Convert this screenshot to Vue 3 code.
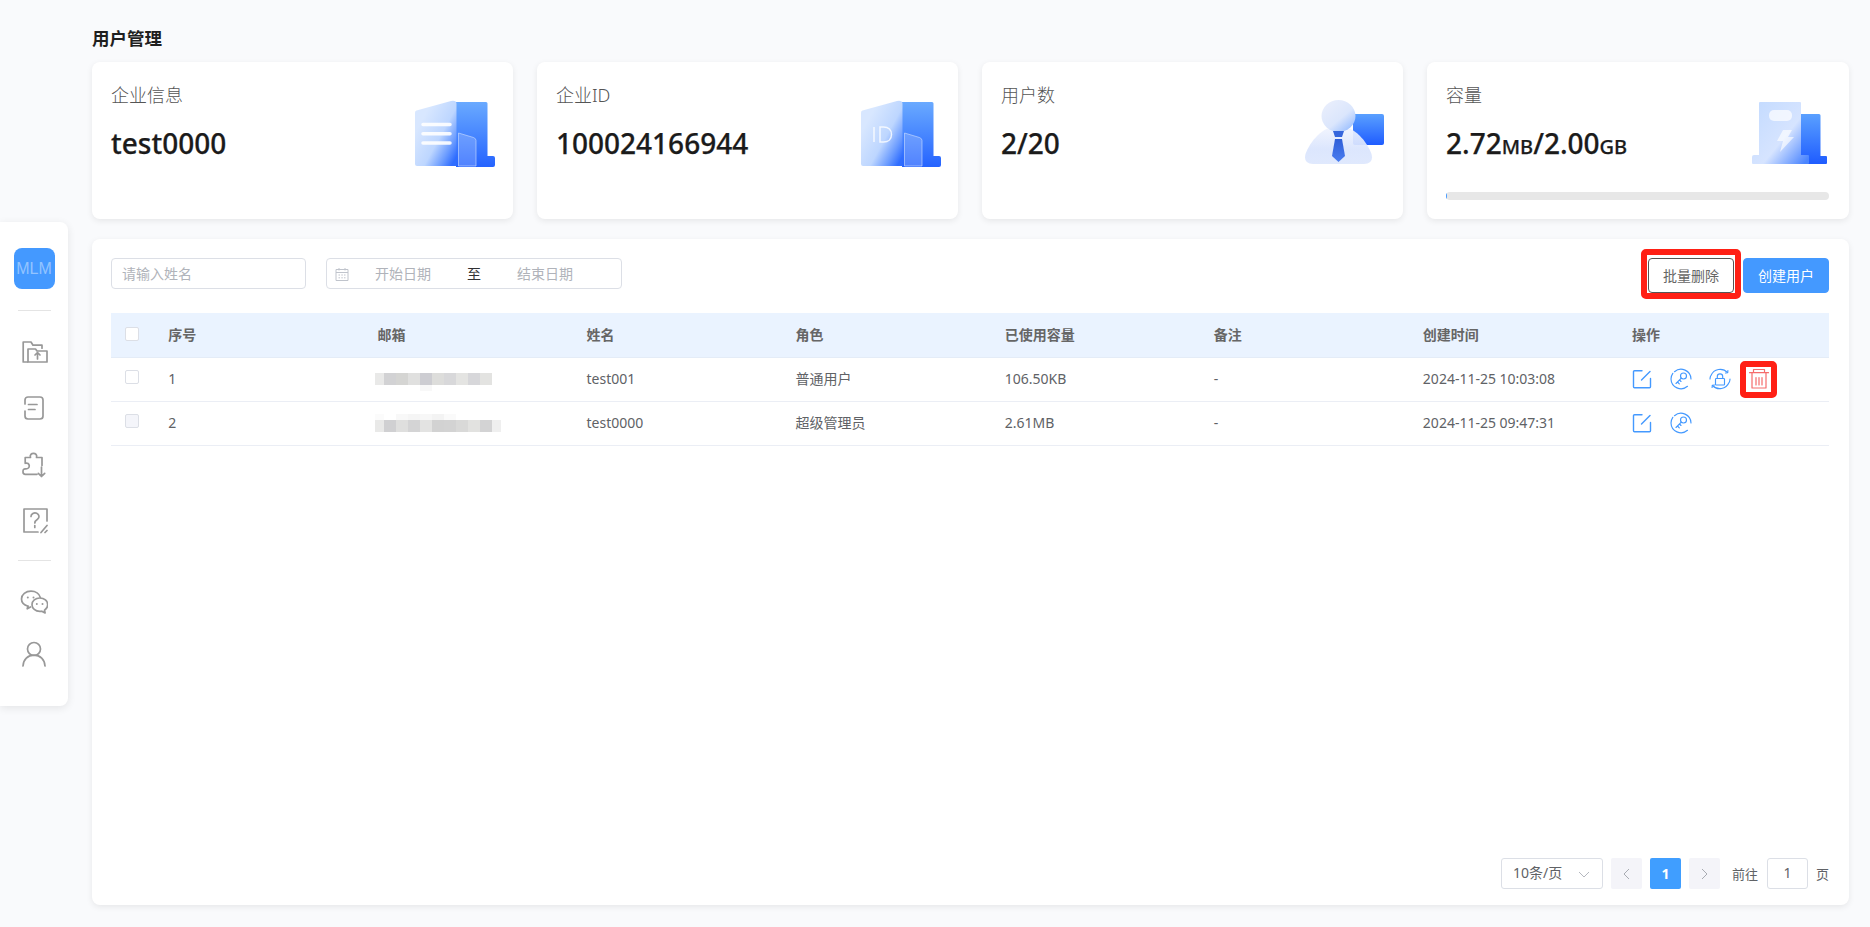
<script setup>
const rows = [
  { id: 1, name: 'test001', role: '普通用户', used: '106.50KB', note: '-', time: '2024-11-25 10:03:08', mClass: 'm1', disabled: false, full: true,
    mosaic: [
      { h: 12, cells: [[9,'#e9e9e8'],[12,'#d2d2d4'],[12,'#d5d5d3'],[12,'#e0e0df'],[12,'#cdcdd2'],[12,'#dddddb'],[12,'#d8d8da'],[12,'#e4e4e2'],[12,'#d7d7da'],[12,'#e3e3e1']] },
      { h: 6, cells: [[45,'#fff'],[12,'#f8f8f8']] }
    ] },
  { id: 2, name: 'test0000', role: '超级管理员', used: '2.61MB', note: '-', time: '2024-11-25 09:47:31', mClass: 'm2', disabled: true, full: false,
    mosaic: [
      { h: 6, cells: [[9,'#fbfbfb'],[12,'#fff'],[12,'#f8f8f8'],[12,'#f5f5f5'],[12,'#f7f7f7'],[12,'#f3f3f3'],[12,'#fafafa']] },
      { h: 12, cells: [[9,'#e9e9e8'],[12,'#d0d0d2'],[12,'#dfdfde'],[12,'#d4d4d5'],[12,'#e3e3e2'],[12,'#d2d2d2'],[12,'#d3d3d3'],[12,'#d9d9d8'],[12,'#e2e2e0'],[12,'#d3d3d4'],[9,'#efefef']] }
    ] }
]
const columns = ['序号', '邮箱', '姓名', '角色', '已使用容量', '备注', '创建时间', '操作']
</script>

<template>
  <div class="page">
    <aside class="side">
      <div class="logo">MLM</div>
      <div class="rule first"></div>
      <svg class="nav first-ic" viewBox="0 0 28 28"><path d="M7.500 24H3.200V4H11l2 3.200h9v3"/><path d="M8 24V11h7.500l1.500 2H27v11z"/><path d="M17.500 21v-6.200M15 17l2.500-2.500L20 17"/></svg>
      <svg class="nav" viewBox="0 0 28 28"><path d="M5 10V6a3 3 0 0 1 3-3h12a3 3 0 0 1 3 3v16a3 3 0 0 1-3 3H8a3 3 0 0 1-3-3v-5"/><path d="M8.500 10.500h8.500M8.500 15.500h6.500"/></svg>
      <svg class="nav" viewBox="0 0 28 28"><path d="M22 15.500V7.500h-5.500c1.700-5.500-7.800-5.500-6 0H5.200v5.800c4.800-1.700 6 6.200 0 5.500-1.500 0-2.200 1-2.200 2.700v.5c0 1.500 1 2.300 2.300 2.300H17"/><path d="M21.500 17v9.500M18.300 23.300l3.200 3.200 3.200-3.200"/></svg>
      <svg class="nav" viewBox="0 0 28 28"><path d="M27 15V3H4v23h14"/><path d="M11 10.500a4 3.600 0 1 1 6.500 2.800c-1.800 1.200-2.700 1.900-2.700 3.700M14.800 19.500v2"/><path d="M21 26.500l6-7M25 26.500l2-2"/></svg>
      <div class="rule second"></div>
      <svg class="nav wechat" viewBox="0 0 28 28"><path d="M8 18.200C4 17 1.500 14.300 1.500 11 1.500 6.600 5.800 3.200 11 3.200c4.600 0 8.400 2.600 9.300 6.200"/><path d="M8 18l-.8 2.800 3.300-1.900"/><path d="M19.800 10c4.500 0 7.900 3 7.900 6.700 0 2.300-1.200 4.200-3.200 5.500l.6 2.800-3.300-1.800c-.7.200-1.300.2-2 .2-4.400 0-7.800-3-7.800-6.700S15.400 10 19.800 10z"/><circle class="dot" cx="7.800" cy="9.500" r="1"/><circle class="dot" cx="13.500" cy="9.500" r="1"/><circle class="dot" cx="16.800" cy="16" r="1"/><circle class="dot" cx="22.500" cy="16" r="1"/></svg>
      <svg class="nav user" viewBox="0 0 28 28"><circle cx="14" cy="9" r="6.500"/><path d="M3 26c.3-6.600 4.800-10.800 11-10.800S24.700 19.400 25 26"/></svg>
    </aside>

    <main class="main">
      <h1 class="title">用户管理</h1>

      <section class="cards">
        <article class="card">
          <div class="card-label">企业信息</div>
          <div class="card-value">test0000</div>
          <svg class="art a1" viewBox="0 0 80 67">
            <defs>
              <linearGradient id="bk1" x1="0" y1="0" x2="0" y2="1"><stop offset="0" stop-color="#6aaaff"/><stop offset="1" stop-color="#2563ff"/></linearGradient>
              <linearGradient id="fr1" x1=".25" y1=".2" x2="1" y2=".85"><stop offset="0" stop-color="#d8e7ff"/><stop offset=".5" stop-color="#bdd6ff"/><stop offset=".8" stop-color="#6a9bff"/><stop offset="1" stop-color="#2f6dff"/></linearGradient>
              <filter id="sf1"><feGaussianBlur stdDeviation=".5"/></filter>
            </defs>
            <path d="M41 2h30a1.500 1.500 0 0 1 1.500 1.500V56H78a2 2 0 0 1 2 2v7a2 2 0 0 1-2 2H41z" fill="url(#bk1)"/>
            <path d="M1.500 10.500L36 1q5.500-1 5.500 3V66H2a2 2 0 0 1-2-2V12.500q0-1.500 1.500-2z" fill="url(#fr1)"/>
            <path d="M43.500 33l15 4.500q2.500 1 2.500 3V66H43.500z" fill="#fff" fill-opacity=".2" stroke="#cfe0ff" stroke-opacity=".6"/>
            <path d="M8 24.500h27M8 33.800h27M8 43h27" stroke="#fff" stroke-width="3.500" stroke-linecap="round" stroke-opacity=".9" filter="url(#sf1)"/>
          </svg>
        </article>
        <article class="card">
          <div class="card-label">企业ID</div>
          <div class="card-value">100024166944</div>
          <svg class="art a1 a2" viewBox="0 0 80 67">
            <defs>
              <linearGradient id="bk2" x1="0" y1="0" x2="0" y2="1"><stop offset="0" stop-color="#6aaaff"/><stop offset="1" stop-color="#2563ff"/></linearGradient>
              <linearGradient id="fr2" x1=".25" y1=".2" x2="1" y2=".85"><stop offset="0" stop-color="#d8e7ff"/><stop offset=".5" stop-color="#bdd6ff"/><stop offset=".8" stop-color="#6a9bff"/><stop offset="1" stop-color="#2f6dff"/></linearGradient>
            </defs>
            <path d="M41 2h30a1.500 1.500 0 0 1 1.500 1.500V56H78a2 2 0 0 1 2 2v7a2 2 0 0 1-2 2H41z" fill="url(#bk2)"/>
            <path d="M1.500 10.500L36 1q5.500-1 5.500 3V66H2a2 2 0 0 1-2-2V12.500q0-1.500 1.500-2z" fill="url(#fr2)"/>
            <path d="M43.500 33l15 4.500q2.500 1 2.500 3V66H43.500z" fill="#fff" fill-opacity=".2" stroke="#cfe0ff" stroke-opacity=".6"/>
            <path d="M13 27v15M19 27v15h3.500c5 0 8-3 8-7.500S27.500 27 22.500 27z" fill="none" stroke="#fff" stroke-width="1.500" stroke-opacity=".8"/>
          </svg>
        </article>
        <article class="card">
          <div class="card-label">用户数</div>
          <div class="card-value">2/20</div>
          <svg class="art a3" viewBox="0 0 79 64">
            <defs>
              <linearGradient id="bk3" x1="0" y1="0" x2="0" y2="1"><stop offset="0" stop-color="#5aa0ff"/><stop offset="1" stop-color="#1f5cff"/></linearGradient>
              <linearGradient id="hd3" x1=".1" y1=".1" x2=".9" y2="1"><stop offset="0" stop-color="#e9eefc"/><stop offset=".55" stop-color="#dbe6fc"/><stop offset="1" stop-color="#8fb8ff"/></linearGradient>
              <linearGradient id="bd3" x1="0" y1="0" x2="0" y2="1"><stop offset="0" stop-color="#f2f5fe"/><stop offset=".6" stop-color="#d9e4fd"/><stop offset="1" stop-color="#dde7fd"/></linearGradient>
              <linearGradient id="tie3" x1="0" y1="0" x2="0" y2="1"><stop offset="0" stop-color="#2f5fd8"/><stop offset="1" stop-color="#4a7df0"/></linearGradient>
            </defs>
            <rect x="48" y="14" width="31" height="31" rx="2" fill="url(#bk3)"/>
            <path d="M33.500 26C50 26 62 42 66.500 54q2.500 10-7.500 10H8Q-2 64 .5 54C5 42 17 26 33.500 26z" fill="url(#bd3)" fill-opacity=".92"/>
            <ellipse cx="33.500" cy="16" rx="17" ry="16" fill="url(#hd3)"/>
            <path d="M28 31h11l-2 6h-7z" fill="#3566dc"/>
            <path d="M30 39h7l3 17-6.500 6-6.500-6z" fill="url(#tie3)"/>
          </svg>
        </article>
        <article class="card">
          <div class="card-label">容量</div>
          <div class="card-value">2.72<small>MB</small>/2.00<small>GB</small></div>
          <div class="meter"><div class="meter-fill"></div></div>
          <svg class="art a4" viewBox="0 0 75 62">
            <defs>
              <linearGradient id="bk4" x1="0" y1="0" x2="0" y2="1"><stop offset="0" stop-color="#5aa0ff"/><stop offset="1" stop-color="#1f5cff"/></linearGradient>
              <linearGradient id="fr4" x1=".1" y1=".1" x2="1" y2=".9"><stop offset="0" stop-color="#c6dcff"/><stop offset=".55" stop-color="#d6e4ff"/><stop offset="1" stop-color="#4b85ff"/></linearGradient>
              <filter id="sf4"><feGaussianBlur stdDeviation=".6"/></filter>
            </defs>
            <path d="M49 12h18a1.500 1.500 0 0 1 1.500 1.500V54H74a1 1 0 0 1 1 1v6a1 1 0 0 1-1 1H49z" fill="url(#bk4)"/>
            <path d="M8 0h40a1 1 0 0 1 1 1v52h7a1 1 0 0 1 1 1v7a1 1 0 0 1-1 1H1a1 1 0 0 1-1-1v-6a2 2 0 0 1 2-2h5V1a1 1 0 0 1 1-1z" fill="url(#fr4)"/>
            <rect x="17" y="8" width="23" height="11" rx="5" fill="#fff" fill-opacity=".7" filter="url(#sf4)"/>
            <path d="M31 28h9l-4 7h6L28 50l3-11h-6z" fill="#fff" fill-opacity=".65"/>
          </svg>
        </article>
      </section>

      <section class="panel">
        <div class="toolbar">
          <div class="field name-field">请输入姓名</div>
          <div class="field date-field">
            <svg class="cal" viewBox="0 0 14 14"><path d="M1 2.500h12v11H1zM1 5.500h12M4 1v2.500M10 1v2.500"/><path d="M3.500 8h1.500M6.300 8h1.500M9 8h1.500M3.500 10.800h1.500M6.300 10.800h1.500M9 10.800h1.500"/></svg>
            <span class="date-part">开始日期</span>
            <span class="date-sep">至</span>
            <span class="date-part">结束日期</span>
          </div>
          <div class="spacer"></div>
          <button class="btn plain">批量删除<i class="mark mark-btn"></i></button>
          <button class="btn primary">创建用户</button>
        </div>

        <div class="grid head">
          <div class="cell check-cell"><span class="check"></span></div>
          <div v-for="c in columns" :key="c" class="cell">{{ c }}</div>
        </div>

        <div v-for="r in rows" :key="r.id" class="grid row">
          <div class="cell check-cell"><span class="check up" :class="{ off: r.disabled }"></span></div>
          <div class="cell txt">{{ r.id }}</div>
          <div class="cell"><div class="mosaic" :class="r.mClass">
            <div v-for="(line, li) in r.mosaic" :key="li" class="mosaic-line">
              <i v-for="(c, ci) in line.cells" :key="ci" :style="{ width: c[0] + 'px', height: line.h + 'px', background: c[1] }"></i>
            </div>
          </div></div>
          <div class="cell txt">{{ r.name }}</div>
          <div class="cell txt cjk">{{ r.role }}</div>
          <div class="cell txt">{{ r.used }}</div>
          <div class="cell txt">{{ r.note }}</div>
          <div class="cell txt">{{ r.time }}</div>
          <div class="cell ops">
            <svg class="op" viewBox="0 0 22 22"><path d="M11 2.800H3.500a1 1 0 0 0-1 1v15a1 1 0 0 0 1 1h15a1 1 0 0 0 1-1V10.500"/><path d="M10.500 12L19 3.500"/></svg>
            <svg class="op thin" viewBox="0 0 22 22"><path d="M4.500 3.700A10 10 0 0 1 21 11M17.500 18.300A10 10 0 0 1 1 11a10 10 0 0 1 1.800-5.700"/><circle cx="13.500" cy="8" r="3"/><path d="M11.300 10.200l-5.300 5.300M7.500 14l1.800 1.800M9.500 12l1.500 1.500"/></svg>
            <svg v-if="r.full" class="op thin" viewBox="0 0 22 22"><path d="M2 7.500A10 10 0 0 1 18.500 4.500M20 14.500A10 10 0 0 1 3.500 17.500M1 11a10 10 0 0 1 .6-3M21 11a10 10 0 0 1-.6 3"/><path d="M16.500 5l2.200-.3.200-2.200M5.500 17l-2.200.3-.2 2.200"/><rect x="6.500" y="10.500" width="9" height="6.500" rx=".8"/><path d="M8.300 10.500V8.500a2.700 2.700 0 0 1 5.400 0v2"/></svg>
            <span v-if="r.full" class="trash-wrap">
              <svg class="op trash" viewBox="0 0 22 22"><path d="M1.500 4.700h19M5.500 4.700V1.500h11v3.200M4 4.700V20h14V4.700M8 9.500v7.500M11 9.500v7.500M14 9.500v7.500"/></svg>
              <i class="mark mark-trash"></i>
            </span>
          </div>
        </div>

        <div class="pager">
          <div class="pg-select">10条/页<svg class="chev" viewBox="0 0 12 7"><path d="M1 1l5 5 5-5"/></svg></div>
          <div class="pg-btn"><svg class="arrow" viewBox="0 0 7 12"><path d="M6 1L1 6l5 5"/></svg></div>
          <div class="pg-btn active">1</div>
          <div class="pg-btn"><svg class="arrow" viewBox="0 0 7 12"><path d="M1 1l5 5-5 5"/></svg></div>
          <span class="pg-text goto">前往</span>
          <div class="pg-input">1</div>
          <span class="pg-text">页</span>
        </div>
      </section>
    </main>
  </div>
</template>

<style>
html, body { margin: 0; background: #f9fafc; }
</style>

<style scoped>
* { box-sizing: border-box; }
.page {
  display: flex;
  height: 927px;
  width: 1870px;
  overflow: hidden;
  background: #f9fafc;
  font-family: "Noto Sans", "Noto Sans CJK SC", sans-serif;
  color: #606266;
}

.side {
  flex: 0 0 68px;
  height: 484px;
  align-self: center;
  display: flex;
  flex-direction: column;
  align-items: center;
  padding-top: 26px;
  background: #fff;
  border-radius: 0 8px 8px 0;
  box-shadow: 0 2px 8px rgba(0, 0, 0, .09);
}
.logo {
  width: 41px;
  height: 41px;
  border-radius: 8px;
  background: #4499ff;
  color: #93c4ff;
  font: 400 16px/41px "Liberation Sans", sans-serif;
  text-align: center;
}
.rule { width: 33px; height: 1px; background: #e4e4e4; }
.rule.first { margin-top: 21px; }
.rule.second { margin-top: 26px; }
.nav {
  width: 28px;
  height: 28px;
  margin-top: 28px;
  fill: none;
  stroke: #989898;
  stroke-width: 1.7;
  stroke-linecap: round;
  stroke-linejoin: round;
}
.nav.first-ic { margin-top: 27px; }
.nav.wechat { margin-top: 27px; }
.nav.user { margin-top: 24px; }
.dot { fill: #989898; stroke: none; }

.main {
  flex: 1;
  min-width: 0;
  display: flex;
  flex-direction: column;
  padding: 26px 21px 22px 24px;
}
.title {
  margin: 0 0 12px;
  font-size: 17.5px;
  line-height: 24px;
  font-weight: 600;
  color: #1f1f1f;
}
.cards {
  display: grid;
  grid-template-columns: repeat(3, 421px) 1fr;
  gap: 24px;
}
.card {
  position: relative;
  height: 157px;
  padding: 21px 19px 0;
  background: #fff;
  border-radius: 8px;
  box-shadow: 0 2px 6px rgba(0, 0, 0, .08);
}
.card-label {
  font-size: 18px;
  line-height: 24px;
  font-weight: 300;
  color: #555;
}
.card-value {
  margin-top: 17px;
  font-size: 28px;
  line-height: 38px;
  font-weight: 500;
  color: #1b1b1b;
  -webkit-text-stroke: .25px #1b1b1b;
}
.card-value small { font-size: 20px; font-weight: 500; }
.art { position: absolute; }
.a1 { width: 80px; height: 67px; right: 18px; top: 38px; }
.a2 { right: 17px; }
.a3 { width: 79px; height: 64px; right: 19px; top: 38px; }
.a4 { width: 75px; height: 62px; right: 22px; top: 40px; }
.meter {
  height: 8px;
  margin: 26px 1px 0 0;
  border-radius: 4px;
  background: #e7e7e7;
  overflow: hidden;
}
.meter-fill { width: 1px; height: 100%; background: #4499ff; }

.panel {
  flex: 1;
  min-height: 0;
  display: flex;
  flex-direction: column;
  margin-top: 20px;
  padding: 19px 20px 16px 19px;
  background: #fff;
  border-radius: 8px;
  box-shadow: 0 2px 6px rgba(0, 0, 0, .08);
}
.toolbar { display: flex; align-items: flex-start; height: 35px; }
.field {
  height: 31px;
  border: 1px solid #dcdfe6;
  border-radius: 4px;
  font-size: 14px;
  line-height: 29px;
  color: #b0b3ba;
}
.name-field { width: 195px; padding-left: 10px; margin-right: 20px; }
.date-field { width: 296px; display: flex; align-items: center; padding-left: 8px; }
.cal {
  width: 14px;
  height: 14px;
  fill: none;
  stroke: #c0c4cc;
  stroke-width: 1;
}
.date-part { width: 108px; text-align: center; }
.date-sep { width: 34px; text-align: center; color: #303133; }
.spacer { flex: 1; }
.btn {
  position: relative;
  width: 86px;
  height: 35px;
  padding: 0;
  border-radius: 4px;
  font: 400 14px/33px "Noto Sans", "Noto Sans CJK SC", sans-serif;
  text-align: center;
}
.btn.plain { background: #fff; border: 1px solid #555; color: #666; margin-right: 9px; }
.btn.primary { background: #4499ff; border: 1px solid #4499ff; color: #fff; }
.mark {
  position: absolute;
  border: 6px solid #ff2015;
  border-radius: 5px;
  pointer-events: none;
}
.mark-btn { left: -8px; right: -8px; top: -10px; bottom: -7px; }

.grid {
  display: grid;
  grid-template-columns: 57.3px repeat(7, 209.1px) 1fr;
  align-items: center;
  font-size: 14px;
}
.head {
  height: 45px;
  margin-top: 20px;
  background: #eaf3ff;
  font-weight: 600;
  color: #666;
  border-bottom: 1px solid #e4ecf7;
}
.row {
  height: 44px;
  border-bottom: 1px solid #ebeef5;
  color: #606266;
}
.head .cell { padding-bottom: 3px; }
.txt { padding-bottom: 2px; }
.txt.cjk { padding-bottom: 4px; }
.check-cell { padding-left: 14px; display: flex; align-items: center; }
.check {
  width: 14px;
  height: 14px;
  background: #fff;
  border: 1px solid #dcdfe6;
  border-radius: 2px;
}
.check.up { margin-bottom: 5px; }
.check.off { background: #f4f5fa; }
.mosaic { display: flex; flex-direction: column; margin-left: -2px; }
.mosaic.m1 { margin-top: 4px; }
.mosaic.m2 { margin-top: -1px; }
.mosaic-line { display: flex; }
.mosaic-line i { display: block; }
.ops { display: flex; align-items: center; gap: 17px; padding-bottom: 2px; margin-left: -1px; }
.op {
  flex: none;
  width: 22px;
  height: 22px;
  fill: none;
  stroke: #4499ff;
  stroke-width: 1.4;
  stroke-linecap: round;
  stroke-linejoin: round;
}
.op.thin { stroke-width: 1.15; }
.trash-wrap { position: relative; display: block; width: 22px; height: 22px; }
.trash { display: block; stroke: #f56c6c; stroke-width: 1.2; }
.mark-trash { left: -8px; right: -7px; top: -7px; bottom: -8px; }

.pager {
  margin-top: auto;
  display: flex;
  align-items: center;
  justify-content: flex-end;
  height: 31px;
  font-size: 13px;
  color: #606266;
}
.pg-select {
  position: relative;
  width: 102px;
  height: 31px;
  margin-right: 8px;
  padding-left: 11px;
  border: 1px solid #dcdfe6;
  border-radius: 3px;
  font-size: 14px;
  line-height: 27px;
}
.chev {
  position: absolute;
  right: 12px;
  top: 12px;
  width: 12px;
  height: 7px;
  fill: none;
  stroke: #b5b8bf;
  stroke-width: 1;
}
.pg-btn {
  width: 31px;
  height: 31px;
  margin-right: 8px;
  display: flex;
  align-items: center;
  justify-content: center;
  border-radius: 2px;
  background: #f4f4f9;
}
.pg-btn.active { background: #409eff; color: #fff; font-weight: 700; font-size: 14px; }
.arrow { width: 7px; height: 12px; fill: none; stroke: #a8abb2; stroke-width: 1; }
.pg-text { color: #606266; font-size: 13px; }
.goto { margin: 0 9px 0 4px; }
.pg-input {
  width: 41px;
  height: 31px;
  margin-right: 8px;
  border: 1px solid #dcdfe6;
  border-radius: 3px;
  line-height: 28px;
  text-align: center;
  font-size: 14px;
  color: #606266;
}
</style>
